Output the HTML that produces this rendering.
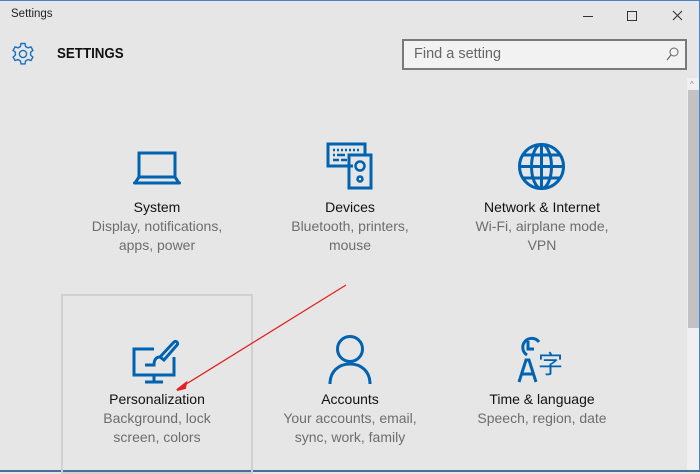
<!DOCTYPE html>
<html><head><style>
*{margin:0;padding:0;box-sizing:border-box}
body{width:700px;height:471px;background:#e6e6e6;position:relative;overflow:hidden;font-family:"Liberation Sans",sans-serif;border-top:1px solid #4a86c5;border-right:1px solid #4a86c5}
.t{position:absolute;font-size:14px;color:#111;text-align:center;width:200px;line-height:19px}
.s{color:#6d6d6d}
svg{position:absolute}
</style></head><body>
<div style="position:absolute;left:11px;top:7px;font-size:11.5px;color:#222">Settings</div>
<div style="position:absolute;left:583px;top:15px;width:10px;height:1px;background:#333"></div>
<div style="position:absolute;left:627px;top:10px;width:10px;height:10px;border:1px solid #333"></div>
<svg style="left:672px;top:9px" width="11" height="11"><path d="M1 1L10 10M10 1L1 10" stroke="#333" stroke-width="1.1"/></svg>
<svg style="left:11px;top:41px" width="24" height="24" viewBox="0 0 24 24"><path d="M10 1.5h4l.6 3 2.4 1.4 2.9-1 2 3.4-2.3 2v2.8l2.3 2-2 3.4-2.9-1-2.4 1.4-.6 3h-4l-.6-3-2.4-1.4-2.9 1-2-3.4 2.3-2v-2.8l-2.3-2 2-3.4 2.9 1L9.4 4.5z" fill="none" stroke="#1a6fc0" stroke-width="1.4"/><circle cx="12" cy="12" r="3.6" fill="none" stroke="#1a6fc0" stroke-width="1.4"/></svg>
<div style="position:absolute;left:57px;top:45px;font-size:14.5px;font-weight:bold;color:#111;transform:scaleX(0.92);transform-origin:left">SETTINGS</div>
<div style="position:absolute;left:402px;top:38px;width:285px;height:31px;border:2px solid #7a7a7a;background:#f2f2f2"></div>
<div style="position:absolute;left:414px;top:45px;font-size:14.5px;color:#666">Find a setting</div>
<svg style="left:666px;top:46px" width="13" height="14"><circle cx="8" cy="5" r="4" fill="none" stroke="#666" stroke-width="1"/><path d="M5 8L1 13" stroke="#666" stroke-width="1.2"/></svg>
<div style="position:absolute;left:687px;top:77px;width:12px;height:393px;background:#f0f0f0"></div>
<div style="position:absolute;left:688px;top:89px;width:11px;height:238px;background:#c2c2c2"></div>
<div style="position:absolute;left:690px;top:79px;font-size:8px;color:#888">^</div>
<div style="position:absolute;left:0;top:469px;width:700px;height:2px;background:#4a6f96"></div>

<svg style="left:133px;top:149px" width="48" height="36" viewBox="0 0 48 36"><rect x="6" y="3" width="36" height="24" fill="none" stroke="#0063b1" stroke-width="3"/><path d="M1.5 33h45" stroke="#0063b1" stroke-width="3" stroke-linecap="round"/><path d="M6 27L2 33M42 27l4 6" stroke="#0063b1" stroke-width="3"/></svg>
<svg style="left:325px;top:141px" width="50" height="48" viewBox="0 0 50 48"><path d="M28 24H3V2h37v10" fill="none" stroke="#0063b1" stroke-width="3"/><path d="M8 8h2M12 8h2M16 8h2M20 8h2M24 8h2M28 8h2M32 8h2M8 13h2M12 13h8M8 18h6M16 18h6" stroke="#0063b1" stroke-width="2.5"/><rect x="24" y="13" width="22" height="33" fill="none" stroke="#0063b1" stroke-width="3"/><circle cx="35" cy="24" r="4.5" fill="none" stroke="#0063b1" stroke-width="2.5"/><circle cx="35" cy="37" r="2.5" fill="none" stroke="#0063b1" stroke-width="2.5"/></svg>
<svg style="left:517px;top:141px" width="49" height="49" viewBox="0 0 49 49"><g fill="none" stroke="#0063b1" stroke-width="3"><circle cx="24.5" cy="24.5" r="22"/><ellipse cx="24.5" cy="24.5" rx="10" ry="22"/><path d="M2.5 24.5h44M6 13h37M6 36h37M24.5 2.5v44"/></g></svg>
<svg style="left:132px;top:338px" width="48" height="45" viewBox="0 0 48 45"><g fill="none" stroke="#0063b1" stroke-width="3"><path d="M22 10H2v26h40V18"/><path d="M22 36v6M13 43h18"/><path d="M42 3c2-2 5 1 3 3L32 21l-4-3z"/><path d="M28 18c-4 0-6 3-6 8h-9"/></g></svg>
<svg style="left:328px;top:333px" width="44" height="50" viewBox="0 0 44 50"><g fill="none" stroke="#0063b1" stroke-width="3"><circle cx="22" cy="15" r="12.5"/><path d="M2 50c0-13 9-20 20-20s20 7 20 20"/></g></svg>
<svg style="left:517px;top:334px" width="50" height="48" viewBox="0 0 50 48"><g fill="none" stroke="#0063b1" stroke-width="3"><path d="M10 20A9 9 0 1 1 22 7"/><path d="M11 6v8h6"/><path d="M2 47L9 25h3l7 22M5 39h11"/></g><text x="21" y="38" font-size="25" fill="#0063b1" font-family="Noto Sans CJK SC,sans-serif">字</text></svg>

<div style="position:absolute;left:61px;top:293px;width:192px;height:180px;border:2px solid #d0d0d0"></div>

<div class="t" style="left:57px;top:197px">System<br><span class="s">Display, notifications,<br>apps, power</span></div>
<div class="t" style="left:250px;top:197px">Devices<br><span class="s">Bluetooth, printers,<br>mouse</span></div>
<div class="t" style="left:442px;top:197px">Network &amp; Internet<br><span class="s">Wi-Fi, airplane mode,<br>VPN</span></div>
<div class="t" style="left:57px;top:389px">Personalization<br><span class="s">Background, lock<br>screen, colors</span></div>
<div class="t" style="left:250px;top:389px">Accounts<br><span class="s">Your accounts, email,<br>sync, work, family</span></div>
<div class="t" style="left:442px;top:389px">Time &amp; language<br><span class="s">Speech, region, date</span></div>

<svg style="left:0;top:0" width="700" height="471"><path d="M346 284L183 385" stroke="#e52020" stroke-width="1.3"/><path d="M177 389l9-7-1 5z" fill="#e52020" stroke="#e52020" stroke-width="2"/></svg>
</body></html>
